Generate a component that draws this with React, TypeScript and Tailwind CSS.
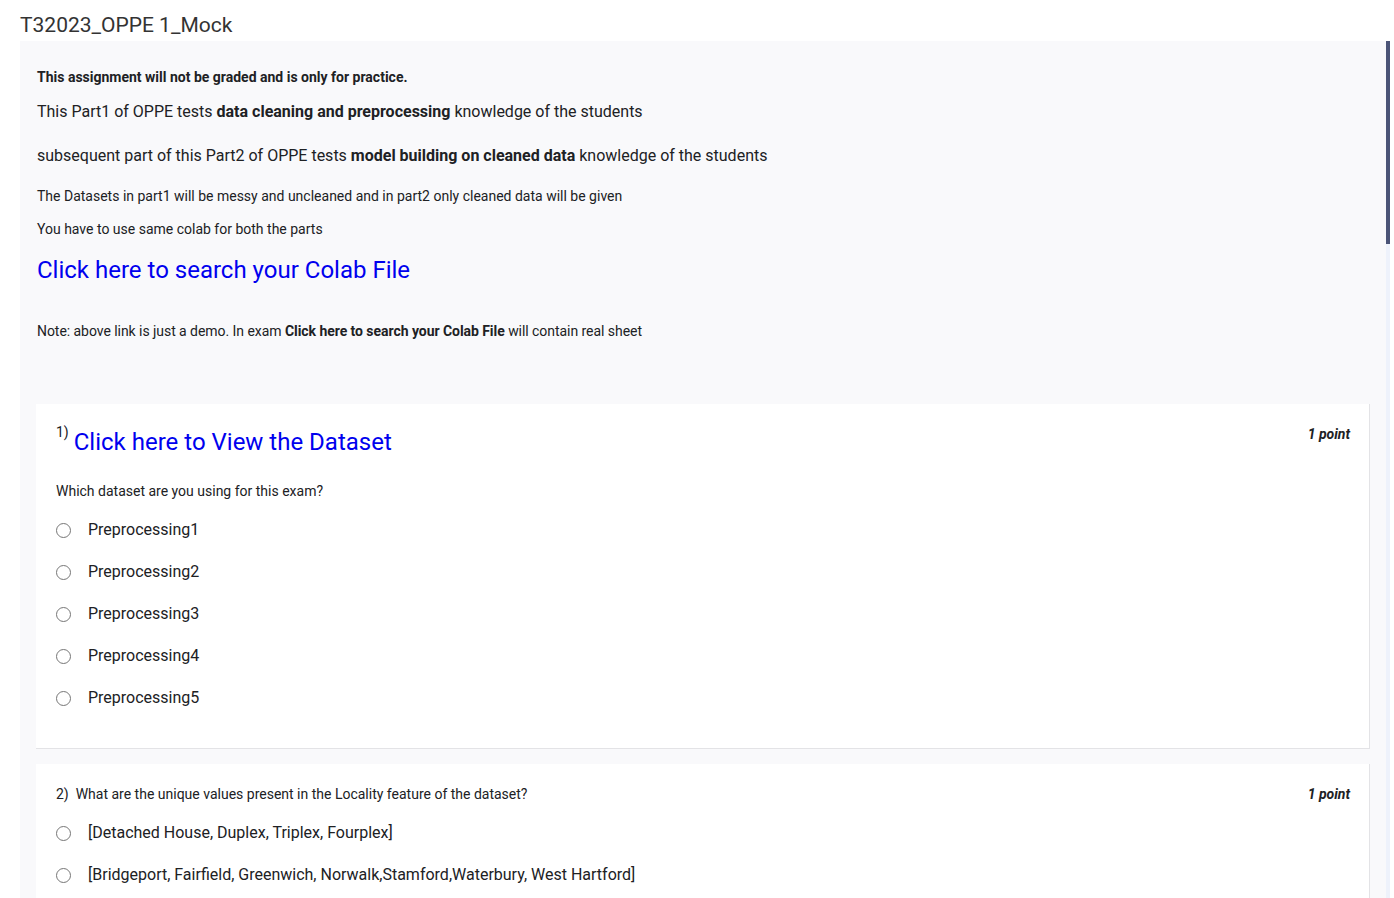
import React from "react";

const Radio = ({ label }: { label: string }) => (
  <div className="flex items-center h-[24px]">
    <span className="ml-[0px] w-[15px] h-[15px] rounded-full border border-[#767676] bg-white shrink-0" />
    <span className="ml-[17px] text-[16px] leading-[24px] text-[#202124]">{label}</span>
  </div>
);

export default function App() {
  return (
    <div className="bg-white min-h-[898px] font-['Roboto',sans-serif] text-[#202124]">
      <div className="pl-[20px] pt-[13px] pb-[4px] text-[21px] leading-[24px] text-[#333]">T32023_OPPE 1_Mock</div>
      <div className="flex">
        <div className="ml-[20px] w-[1366px] bg-[#f9f9fb] pl-[17px] pr-[16px] pt-[26px] pb-[40px]">
          <p className="text-[14px] leading-[20px] font-bold">This assignment will not be graded and is only for practice.</p>
          <p className="mt-[13px] text-[16px] leading-[24px]">
            This Part1 of OPPE tests <b>data cleaning and preprocessing</b> knowledge of the students
          </p>
          <p className="mt-[20px] text-[16px] leading-[24px]">
            subsequent part of this Part2 of OPPE tests <b>model building on cleaned data</b> knowledge of the students
          </p>
          <p className="mt-[18px] text-[14px] leading-[20px]">The Datasets in part1 will be messy and uncleaned and in part2 only cleaned data will be given</p>
          <p className="mt-[13px] text-[14px] leading-[20px]">You have to use same colab for both the parts</p>
          <p className="mt-[15px] text-[24px] leading-[32px] text-[#0000ee]">Click here to search your Colab File</p>
          <p className="mt-[35px] text-[14px] leading-[20px] tracking-[-0.05px]">
            Note: above link is just a demo. In exam <b>Click here to search your Colab File</b> will contain real sheet
          </p>

          <div className="-ml-[1px] mt-[63px] bg-white border-r border-b border-[#e3e3e6] pl-[20px] pr-[19px] pt-[22px] pb-[38px]">
            <div className="flex justify-between">
              <div className="flex items-start">
                <span className="text-[14px] leading-[20px] mt-[-4px]">1)</span>
                <span className="ml-[5px] text-[24px] leading-[32px] text-[#0000ee]">Click here to View the Dataset</span>
              </div>
              <span className="text-[14px] leading-[20px] font-bold italic mt-[-2px]">1 point</span>
            </div>
            <p className="mt-[23px] text-[14px] leading-[20px]">Which dataset are you using for this exam?</p>
            <div className="mt-[17px] flex flex-col gap-[18px]">
              {["Preprocessing1", "Preprocessing2", "Preprocessing3", "Preprocessing4", "Preprocessing5"].map((o) => (
                <Radio key={o} label={o} />
              ))}
            </div>
          </div>

          <div className="-ml-[1px] mt-[15px] bg-white border-r border-b border-[#e3e3e6] pl-[20px] pr-[19px] pt-[20px] pb-[40px]">
            <div className="flex justify-between">
              <p className="text-[14px] leading-[20px]">2)&nbsp; What are the unique values present in the Locality feature of the dataset?</p>
              <span className="text-[14px] leading-[20px] font-bold italic">1 point</span>
            </div>
            <div className="mt-[17px] flex flex-col gap-[18px]">
              <Radio label="[Detached House, Duplex, Triplex, Fourplex]" />
              <Radio label="[Bridgeport, Fairfield, Greenwich, Norwalk,Stamford,Waterbury, West Hartford]" />
            </div>
          </div>
        </div>
        <div className="w-[4px] bg-[#eef2fb] self-stretch">
          <div className="h-[203px] bg-[#4b5477]" />
        </div>
      </div>
    </div>
  );
}
